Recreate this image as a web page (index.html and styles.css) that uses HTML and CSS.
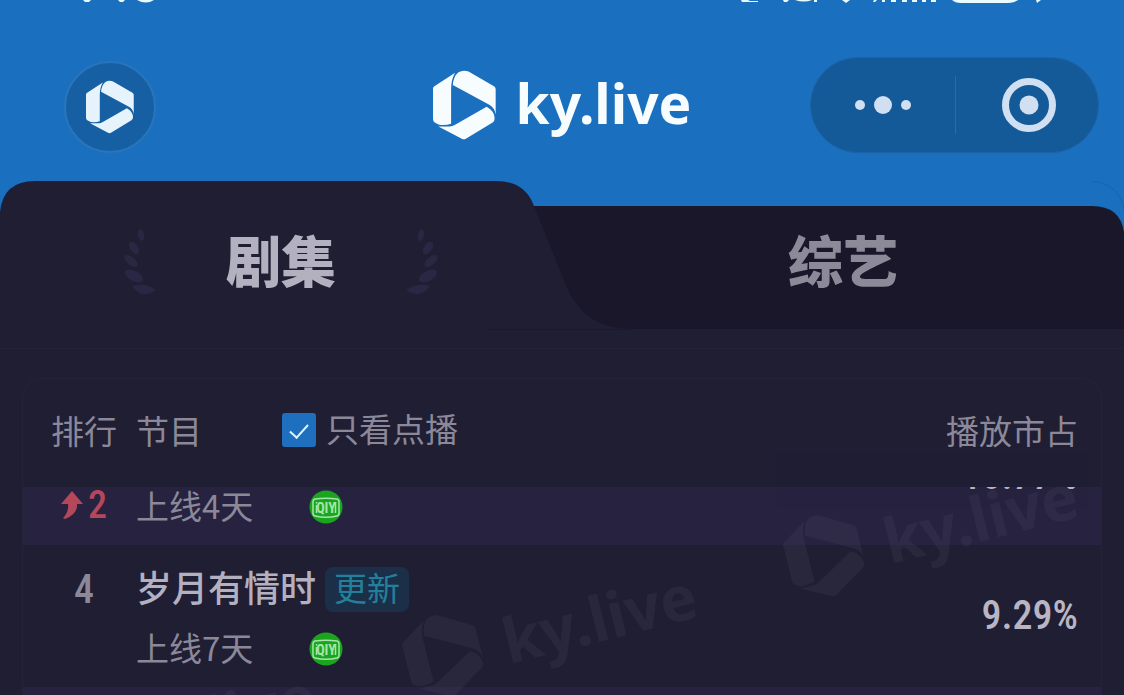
FILE: index.html
```html
<!DOCTYPE html>
<html lang="zh-CN">
<head>
<meta charset="utf-8">
<meta name="viewport" content="width=device-width, initial-scale=1">
<title>ky.live</title>
<link rel="stylesheet" href="styles.css">
</head>
<body>
<svg class="defs" aria-hidden="true">
  <symbol id="logo" viewBox="0 0 188 208">
    <path d="M3 49 66 8Q54 28 54 56V160Q40 165 18 163L5 156Q0 153 0 146V56Q0 51 3 49Z"/>
    <path d="M59 44Q61 18 76 6 90-2 106 4L182 48Q187 51 187 57V132Q184 112 168 103Z"/>
    <path d="M16 168H50Q58 168 66 163L160 109Q184 122 184 144 184 152 178 156L98 205Q92 208 86 205Z"/>
  </symbol>
  <symbol id="laurel" viewBox="0 0 36 68">
    <ellipse cx="19" cy="7" rx="3" ry="6" transform="rotate(-10 19 7)"/>
    <ellipse cx="12" cy="20" rx="4" ry="7" transform="rotate(-32 12 20)"/>
    <ellipse cx="9" cy="33" rx="4" ry="8" transform="rotate(-50 9 33)"/>
    <ellipse cx="12" cy="48" rx="5" ry="10" transform="rotate(-62 12 48)"/>
    <path d="M10 58Q23 54 34 62 20 72 10 58Z"/>
  </symbol>
  <symbol id="iqiyi" viewBox="0 0 34 34">
    <circle cx="17" cy="17" r="16.500" fill="#1ba51f"/>
    <path d="M6 9Q17 7.500 28 9 30 9.500 30 12V23Q30 25.500 28 26 17 28.500 6 26 4 25.500 4 23V12Q4 9.500 6 9Z" fill="none" stroke="#a5e5ac" stroke-width="1.500"/>
    <path d="M7.500 12V13.500M7.500 15V23M26.500 12V23" stroke="#a5e5ac" stroke-width="1.500"/>
    <text x="17" y="23" text-anchor="middle" class="iqiyi-text">QIY</text>
  </symbol>
</svg>
<div class="page">
  <svg class="status" viewBox="0 0 1124 5" preserveAspectRatio="none" aria-hidden="true">
    <path d="M83 0H91L89 2H85ZM118 0H125L123 2H120ZM137 0Q146 5 154 0ZM741 0H748L750 1H758V2H742ZM783 0H789L787 2H784ZM795 0Q804 3 812 0ZM814 0H817V2H814ZM842 0H850L846 3ZM874 0H877L875 2H873ZM882 0H885V2H882ZM891 0H896V2H891ZM902 0H907V2H902ZM912 0H917V2H912ZM922 0H926V2H922ZM931 0H936V2H931ZM952 0H1018Q1014 3 1008 3H961Q955 3 952 0ZM1036 0H1041L1037 3Z"/>
  </svg>
  <header class="header">
    <button class="round" type="button" aria-label="首页"><svg><use href="#logo"/></svg></button>
    <a class="brand" href="#"><svg aria-hidden="true"><use href="#logo"/></svg><span>ky.live</span></a>
    <div class="capsule">
      <button type="button" aria-label="更多"><svg width="58" height="20" viewBox="0 0 58 20"><circle cx="6" cy="10" r="5"/><circle cx="29" cy="10" r="9"/><circle cx="52" cy="10" r="5"/></svg></button>
      <button type="button" aria-label="关闭"><svg width="54" height="54" viewBox="0 0 54 54"><circle cx="27" cy="27" r="23.500" class="ring"/><circle cx="27" cy="27" r="9.500"/></svg></button>
    </div>
  </header>
  <nav class="tabs">
    <svg class="tabs-shape" viewBox="0 0 1124 167" preserveAspectRatio="none" aria-hidden="true">
      <path d="M1092 0Q1120 3 1124 29" fill="none" stroke="#1864ad"/>
      <path d="M500 25H1092Q1120 25 1124 51V150H500Z" fill="#191729"/>
      <path d="M0 31Q3 0 35 0H496Q525 0 534 25L565 102Q583 148 630 148H1124V167H0Z" fill="#201e33"/>
      <path d="M488 148.500H630" stroke="#1b192c"/>
    </svg>
    <button class="tab tab-active" type="button"><svg aria-hidden="true"><use href="#laurel"/></svg><span>剧集</span><svg class="flip" aria-hidden="true"><use href="#laurel"/></svg></button>
    <button class="tab" type="button"><span>综艺</span></button>
  </nav>
  <main class="content">
    <section class="card">
      <table class="table">
        <thead>
          <tr>
            <th class="rank" scope="col">排行</th>
            <th scope="col"><div class="filter"><span>节目</span><label><input type="checkbox" checked><span>只看点播</span></label></div></th>
            <th class="share" scope="col">播放市占</th>
          </tr>
        </thead>
        <tbody>
          <tr class="row-cut">
            <td class="rank rise"><div><svg width="22" height="28" viewBox="0 0 22 28" aria-hidden="true"><path d="M11 0 22 13H16Q17 23 4 28L2 27Q8 21 7 13H0Z"/></svg><span>2</span></div></td>
            <td><div class="sub"><span>上线4天</span><svg role="img" aria-label="爱奇艺"><use href="#iqiyi"/></svg></div></td>
            <td class="share"><div class="cut"><span>10.77%</span></div></td>
          </tr>
          <tr class="row">
            <td class="rank">4</td>
            <td><div class="title"><span>岁月有情时</span><span class="badge">更新</span></div><div class="sub"><span>上线7天</span><svg role="img" aria-label="爱奇艺"><use href="#iqiyi"/></svg></div></td>
            <td class="share">9.29%</td>
          </tr>
        </tbody>
      </table>
      <div class="next-row"></div>
      <div class="marks" aria-hidden="true">
        <div class="mark mark-a"><svg><use href="#logo"/></svg>ky.live</div>
        <div class="mark mark-b"><svg><use href="#logo"/></svg>ky.live</div>
        <div class="mark mark-c"><svg><use href="#logo"/></svg>ky.live</div>
      </div>
    </section>
  </main>
</div>
</body>
</html>
```
FILE: styles.css
```css
* { box-sizing: border-box; }
body { margin: 0; background: #201e33; font-family: "Noto Sans CJK SC", sans-serif; color: #8b8899; }
button { border: 0; padding: 0; background: none; font: inherit; color: inherit; }
svg { display: block; flex: none; fill: currentColor; }
.defs { position: absolute; width: 0; height: 0; }
.page { display: flex; flex-direction: column; height: 100vh; overflow: hidden; }

.status { width: 100%; height: 5px; background: #1a6fbf; color: #e8fbff; }
.header { display: grid; grid-template-columns: 1fr auto 1fr; align-items: center; padding: 52px 25px 28px; background: #1a6fbf; }
.round { display: flex; align-items: center; justify-content: center; width: 92px; height: 92px; margin: 4px 0 0 39px; border: 2px solid #2874bd; border-radius: 50%; background: #165fa3; color: #e6f3fc; }
.round svg { width: 48px; height: 54px; }
.brand { display: flex; align-items: center; gap: 20px; color: #f7fdff; text-decoration: none; font: bold 55px/70px "Noto Sans", sans-serif; }
.brand svg { width: 63px; height: 70px; }
.brand span { padding-bottom: 4px; }
.capsule { display: grid; grid-template-columns: 1fr 1fr; justify-self: end; width: 289px; height: 96px; border: 1px solid #1a64a6; border-radius: 48px; background: #155a98; color: #d0dff1; }
.capsule button { display: flex; align-items: center; justify-content: center; }
.capsule button + button { position: relative; padding-left: 6px; }
.capsule button + button::before { content: ""; position: absolute; left: 0; top: 18px; bottom: 18px; width: 1px; background: #2d6ba5; }
.ring { fill: none; stroke: currentColor; stroke-width: 7; }

.tabs { position: relative; display: grid; grid-template-columns: 1fr 1fr; height: 168px; flex: none; background: #1a6fbf; border-bottom: 1px solid #262339; }
.tabs-shape { position: absolute; inset: 0; width: 100%; height: 100%; }
.tab { position: relative; display: flex; align-items: center; justify-content: center; gap: 68px; padding-bottom: 6px; font-size: 55px; line-height: 60px; font-weight: 900; color: #8c8a98; }
.tab-active { color: #b3b1c0; }
.tab span { padding-bottom: 8px; }
.tab svg { width: 36px; height: 68px; color: #2a2744; }
.tab .flip { transform: scaleX(-1); }

.content { display: flex; flex: 1; min-height: 0; padding: 29px 22px 0; }
.card { position: relative; display: flex; flex-direction: column; flex: 1; border: 1px solid #262339; border-bottom: 0; border-radius: 20px 20px 0 0; overflow: hidden; }
.table { width: 100%; border-collapse: collapse; font-size: 33px; line-height: 36px; }
th, td { padding: 0; font-weight: 400; text-align: left; }
thead th { height: 108px; padding-bottom: 6px; }
.table .rank { width: 113px; padding-left: 28px; padding-right: 19px; text-align: center; white-space: nowrap; }
.table .share { padding-right: 23px; text-align: right; }
.filter, .filter label { display: flex; align-items: center; }
.filter { gap: 80px; }
.filter label { gap: 10px; }
.filter label span { padding-bottom: 4px; }
input { appearance: none; width: 34px; height: 34px; margin: 0; border-radius: 3px; background: #1e6fbd; display: flex; align-items: center; justify-content: center; }
input:checked::before { content: ""; width: 8px; height: 16px; margin-bottom: 3px; border: solid #dff6ff; border-width: 0 2px 2px 0; transform: rotate(42deg); }
.sub { display: flex; align-items: center; gap: 56px; line-height: 36px; }
.sub span { padding-bottom: 4px; }
.sub svg { width: 34px; height: 34px; }
.iqiyi-text { font: bold 14px "Roboto Condensed", Roboto, sans-serif; fill: #a5e5ac; }

.row-cut { height: 58px; background: #26223f; }
.row-cut td { height: 58px; vertical-align: top; padding-top: 0; }
.rise div { display: flex; align-items: center; justify-content: center; gap: 5px; color: #b5475b; }
tbody .rank { font-family: "Roboto Condensed", Roboto, sans-serif; font-weight: 500; font-size: 38px; line-height: 36px; }
.cut { display: flex; flex-direction: column; justify-content: flex-end; height: 3px; overflow: hidden; }
.cut span { line-height: 28px; }
.row { height: 142px; }
.row td { height: 142px; vertical-align: top; padding-top: 21px; }
tbody .row .rank { line-height: 48px; font-size: 40px; }
.title { display: flex; align-items: center; gap: 9px; margin-bottom: 17px; font-size: 36px; line-height: 40px; font-weight: 500; color: #b3b1c0; }
.title span { padding-bottom: 6px; }
.title .badge { padding: 0 9px 5px; border-radius: 8px; background: #1b2f49; color: #23809c; font-size: 33px; font-weight: 400; }
tbody .share { font-family: "Roboto Condensed", Roboto, sans-serif; font-weight: 500; font-size: 40px; color: #b8b5c4; }
.row .share { vertical-align: middle; padding-top: 0; }
.next-row { flex: 1; background: #26223f; }

.marks { position: absolute; inset: 0; pointer-events: none; }
.mark { position: absolute; display: flex; align-items: center; gap: 23px; color: #fff; opacity: 0.04; font: bold 62px/84px "Noto Sans", sans-serif; transform: translate(-50%, -50%) rotate(-14deg); }
.mark svg { width: 76px; height: 84px; }
.mark-a { left: 528px; top: 250px; }
.mark-b { left: 909px; top: 150px; }
.mark-c { left: 147px; top: 350px; }
```
